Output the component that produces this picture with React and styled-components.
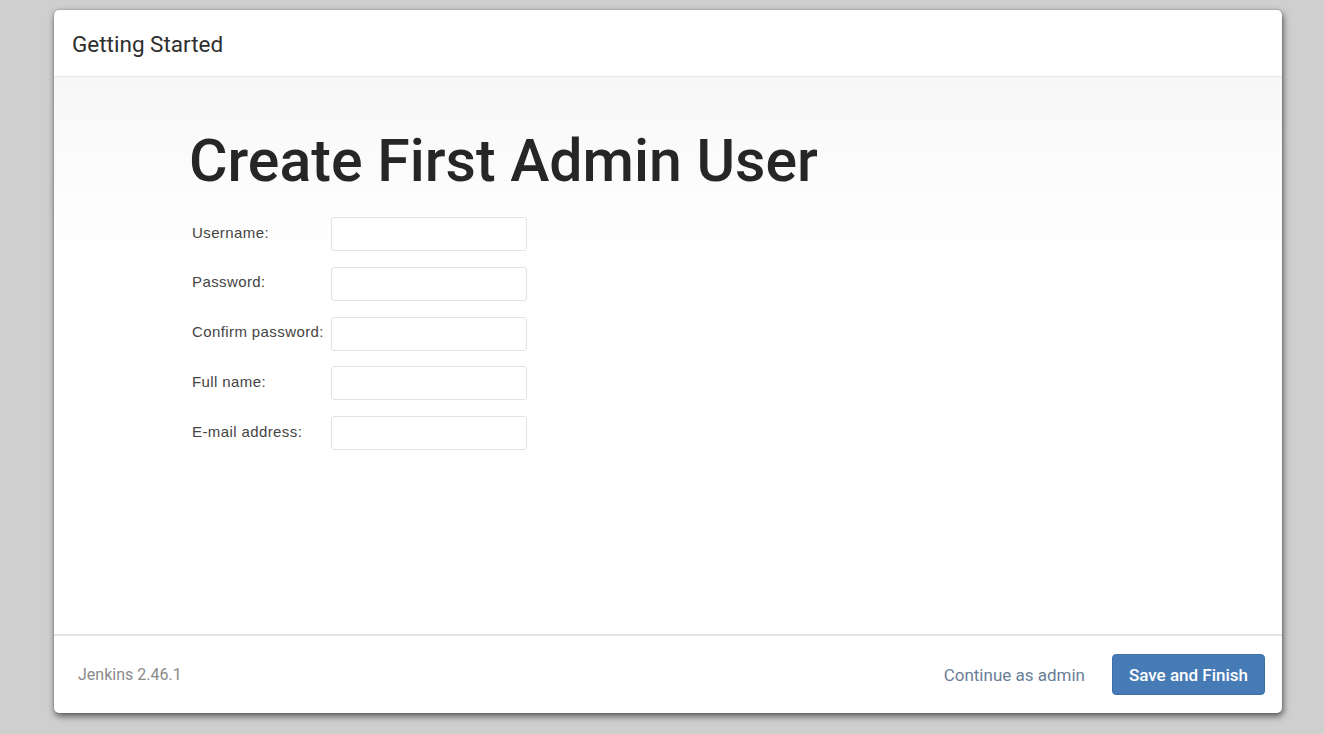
import React from 'react';
import styled, { createGlobalStyle } from 'styled-components';

const GlobalStyle = createGlobalStyle`
  html, body {
    margin: 0;
    padding: 0;
    background: #cfcfd0;
    font-family: Roboto, "Liberation Sans", sans-serif;
  }
  #root {
    min-height: 734px;
  }
`;

const Page = styled.div`
  width: 1324px;
  height: 734px;
  box-sizing: border-box;
  padding: 10px 42px 0 54px;
  background: #cfcfd0;
`;

const Dialog = styled.div`
  height: 703px;
  display: flex;
  flex-direction: column;
  background: #fff;
  border-radius: 5px;
  box-shadow: 1px 3px 7px rgba(0, 0, 0, 0.6), 0 0 2px rgba(0, 0, 0, 0.25);
  overflow: hidden;
`;

const Header = styled.div`
  height: 66px;
  flex: none;
  display: flex;
  align-items: center;
  padding: 0 18px;
  border-bottom: 1px solid #e6e6e8;
`;

const Title = styled.h4`
  margin: 0;
  margin-top: 1px;
  font-family: Roboto, sans-serif;
  font-size: 22.5px;
  font-weight: 400;
  color: #2e2e2e;
`;

const Body = styled.div`
  flex: 1;
  padding: 50px 0 0 133px;
  background: linear-gradient(to bottom, #f7f7f8 0px, #fafafb 60px, #fdfdfd 130px, #fff 200px);
`;

const Heading = styled.h1`
  margin: 0 0 22px 2px;
  font-family: Roboto, sans-serif;
  font-size: 59px;
  font-weight: 500;
  line-height: 68px;
  color: #262626;
`;

const Form = styled.div`
  display: flex;
  flex-direction: column;
  gap: 15.75px;
  padding-left: 5px;
`;

const Row = styled.label`
  display: grid;
  grid-template-columns: 139px 196px;
  align-items: center;
`;

const Label = styled.span`
  font-family: "Liberation Sans", Arial, sans-serif;
  font-size: 15px;
  letter-spacing: 0.4px;
  color: #444;
  margin-top: -4px;
`;

const Input = styled.input`
  box-sizing: border-box;
  height: 34px;
  width: 196px;
  border: 1px solid #e2e2e2;
  border-radius: 3px;
  background: #fff;
  outline: none;
  padding: 4px 8px;
  font-size: 14px;
`;

const Footer = styled.div`
  height: 77px;
  flex: none;
  display: flex;
  align-items: center;
  justify-content: space-between;
  padding: 0 17px 0 24px;
  border-top: 2px solid #e2e2e4;
`;

const Version = styled.span`
  font-family: Roboto, sans-serif;
  font-size: 16px;
  color: #8a8a8a;
`;

const Actions = styled.div`
  display: flex;
  align-items: center;
  gap: 27px;
`;

const LinkButton = styled.button`
  border: none;
  background: none;
  padding: 0;
  font-family: Roboto, sans-serif;
  font-size: 17px;
  color: #6a7e96;
  cursor: pointer;
`;

const PrimaryButton = styled.button`
  height: 41px;
  width: 153px;
  border: 1px solid #3e6fa9;
  border-radius: 4px;
  background: #477bb6;
  color: #fff;
  font-family: Roboto, sans-serif;
  font-size: 17px;
  font-weight: 500;
  cursor: pointer;
`;

const fields = [
  { label: 'Username:', type: 'text' },
  { label: 'Password:', type: 'password' },
  { label: 'Confirm password:', type: 'password' },
  { label: 'Full name:', type: 'text' },
  { label: 'E-mail address:', type: 'email' },
];

export default function App() {
  return (
    <Page>
      <GlobalStyle />
      <Dialog>
        <Header>
          <Title>Getting Started</Title>
        </Header>
        <Body>
          <Heading>Create First Admin User</Heading>
          <Form>
            {fields.map((f) => (
              <Row key={f.label}>
                <Label>{f.label}</Label>
                <Input type={f.type} />
              </Row>
            ))}
          </Form>
        </Body>
        <Footer>
          <Version>Jenkins 2.46.1</Version>
          <Actions>
            <LinkButton>Continue as admin</LinkButton>
            <PrimaryButton>Save and Finish</PrimaryButton>
          </Actions>
        </Footer>
      </Dialog>
    </Page>
  );
}
